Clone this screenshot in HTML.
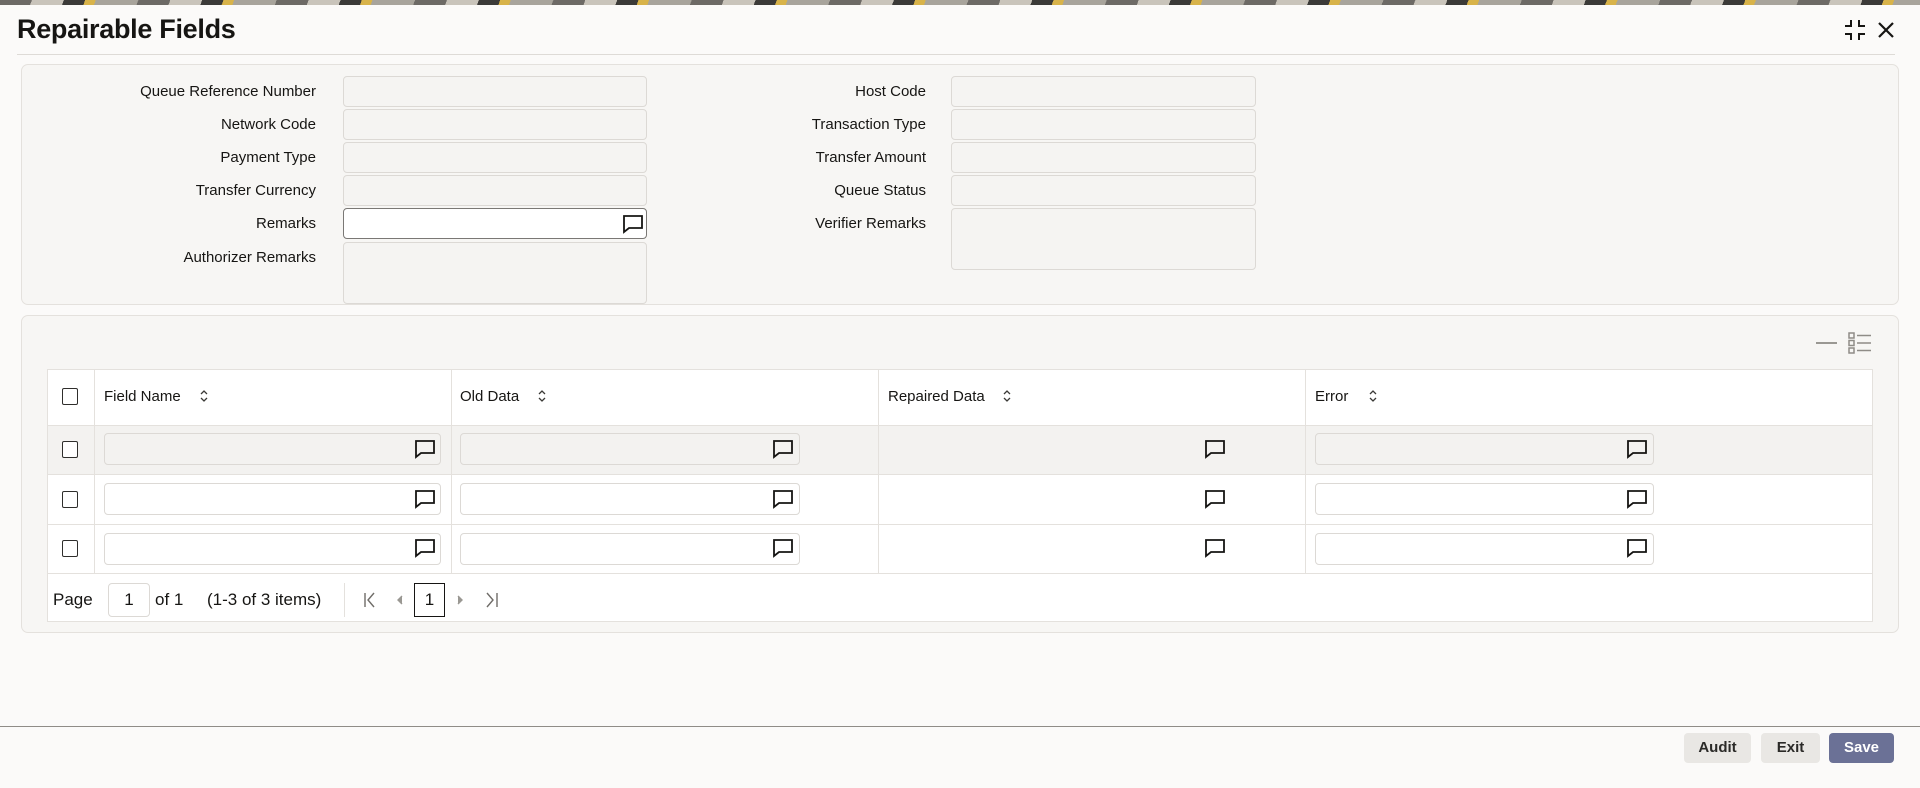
<!DOCTYPE html>
<html><head><meta charset="utf-8"><style>
*{box-sizing:border-box;margin:0;padding:0}
body{width:1920px;height:788px;overflow:hidden;background:#fbfaf9;font-family:"Liberation Sans Narrow","Liberation Sans",sans-serif;color:#161513;position:relative}
.a{position:absolute}
.strip{left:0;top:0;width:1920px;height:5px;background:repeating-linear-gradient(110deg,#6d6a66 0 30px,#c9c4bb 30px 60px,#3b3a38 60px 80px,#d8b34a 80px 90px,#a8a49c 90px 130px)}
h1{position:absolute;left:17px;top:14px;font-size:27px;font-weight:bold;font-family:"Liberation Sans Narrow","Liberation Sans",sans-serif;letter-spacing:-0.3px}
.hl{left:17px;top:54px;width:1878px;height:1px;background:#dedbd7}
.panel{background:#f7f6f4;border:1px solid #e4e1dd;border-radius:7px}
.lbl{font-size:15px;text-align:right;width:300px;color:#161513}
.inp{background:#f5f4f2;border:1px solid #dcd9d5;border-radius:4px;height:31px}
.th{font-size:15px;top:388px}
.cb{width:16px;height:17px;border:1.5px solid #2f2e2c;border-radius:2px;background:#fff}
.ri{height:32px;border:1px solid #dcd9d5;border-radius:4px;background:#fff}
.vl{width:1px;background:#e4e1dd}
.hr{height:1px;background:#e4e1dd}
.btn{height:30px;border-radius:4px;font-size:15px;font-weight:bold;text-align:center;line-height:30px;font-family:"Liberation Sans",sans-serif}
</style></head><body>
<div class="a strip"></div>
<h1>Repairable Fields</h1>
<svg class="a" style="left:1843px;top:18px" width="24" height="24" viewBox="0 0 24 24" fill="none" stroke="#161513" stroke-width="2"><path d="M2 8h6V2M22 8h-6V2M2 16h6v6M22 16h-6v6"/></svg>
<svg class="a" style="left:1876px;top:20px" width="20" height="20" viewBox="0 0 20 20" stroke="#161513" stroke-width="2.2"><path d="M3 3l14 14M17 3L3 17"/></svg>
<div class="a hl"></div>

<div class="a panel" style="left:21px;top:64px;width:1878px;height:241px"></div>
<div class="a lbl" style="left:16px;top:83px">Queue Reference Number</div>
<div class="a lbl" style="left:16px;top:116px">Network Code</div>
<div class="a lbl" style="left:16px;top:149px">Payment Type</div>
<div class="a lbl" style="left:16px;top:182px">Transfer Currency</div>
<div class="a lbl" style="left:16px;top:215px">Remarks</div>
<div class="a lbl" style="left:16px;top:249px">Authorizer Remarks</div>
<div class="a inp" style="left:343px;top:76px;width:304px"></div>
<div class="a inp" style="left:343px;top:109px;width:304px"></div>
<div class="a inp" style="left:343px;top:142px;width:304px"></div>
<div class="a inp" style="left:343px;top:175px;width:304px"></div>
<div class="a inp" style="left:343px;top:208px;width:304px;background:#fff;border-color:#7a7875"></div>
<svg class="a" style="left:622px;top:213px" width="22" height="22" viewBox="0 0 22 22" fill="none" stroke="#161513" stroke-width="1.8"><path d="M2 3h18v12H7l-5 4z"/></svg>
<div class="a inp" style="left:343px;top:242px;width:304px;height:62px"></div>

<div class="a lbl" style="left:626px;top:83px">Host Code</div>
<div class="a lbl" style="left:626px;top:116px">Transaction Type</div>
<div class="a lbl" style="left:626px;top:149px">Transfer Amount</div>
<div class="a lbl" style="left:626px;top:182px">Queue Status</div>
<div class="a lbl" style="left:626px;top:215px">Verifier Remarks</div>
<div class="a inp" style="left:951px;top:76px;width:305px"></div>
<div class="a inp" style="left:951px;top:109px;width:305px"></div>
<div class="a inp" style="left:951px;top:142px;width:305px"></div>
<div class="a inp" style="left:951px;top:175px;width:305px"></div>
<div class="a inp" style="left:951px;top:208px;width:305px;height:62px"></div>

<div class="a panel" style="left:21px;top:315px;width:1878px;height:318px"></div>
<div class="a" style="left:1816px;top:342px;width:21px;height:2px;background:#9a9893"></div>
<svg class="a" style="left:1848px;top:331px" width="24" height="24" viewBox="0 0 24 24" fill="none" stroke="#8f8c87" stroke-width="1.5"><rect x="1" y="2" width="5" height="5"/><rect x="1" y="9.5" width="5" height="5"/><rect x="1" y="17" width="5" height="5"/><path d="M9 4.5h14M9 12h14M9 19.5h14"/></svg>

<div class="a" style="left:47px;top:369px;width:1826px;height:253px;background:#fff;border:1px solid #e4e1dd"></div>
<div class="a" style="left:48px;top:425px;width:1824px;height:49px;background:#f3f2f0"></div>
<div class="a hr" style="left:47px;top:425px;width:1826px"></div>
<div class="a hr" style="left:47px;top:474px;width:1826px"></div>
<div class="a hr" style="left:47px;top:524px;width:1826px"></div>
<div class="a hr" style="left:47px;top:573px;width:1826px"></div>
<div class="a vl" style="left:94px;top:369px;height:204px"></div>
<div class="a vl" style="left:451px;top:369px;height:204px"></div>
<div class="a vl" style="left:878px;top:369px;height:204px"></div>
<div class="a vl" style="left:1305px;top:369px;height:204px"></div>

<div class="a cb" style="left:62px;top:388px"></div>
<div class="a th" style="left:104px">Field Name</div>
<div class="a th" style="left:460px">Old Data</div>
<div class="a th" style="left:888px">Repaired Data</div>
<div class="a th" style="left:1315px">Error</div>
<svg class="a" style="left:198px;top:388px" width="12" height="16" viewBox="0 0 12 16" fill="none" stroke="#3a3936" stroke-width="1.3"><path d="M3 6l3-3 3 3M3 10l3 3 3-3"/></svg>
<svg class="a" style="left:536px;top:388px" width="12" height="16" viewBox="0 0 12 16" fill="none" stroke="#3a3936" stroke-width="1.3"><path d="M3 6l3-3 3 3M3 10l3 3 3-3"/></svg>
<svg class="a" style="left:1001px;top:388px" width="12" height="16" viewBox="0 0 12 16" fill="none" stroke="#3a3936" stroke-width="1.3"><path d="M3 6l3-3 3 3M3 10l3 3 3-3"/></svg>
<svg class="a" style="left:1367px;top:388px" width="12" height="16" viewBox="0 0 12 16" fill="none" stroke="#3a3936" stroke-width="1.3"><path d="M3 6l3-3 3 3M3 10l3 3 3-3"/></svg>

<!-- rows -->
<div class="a cb" style="left:62px;top:441px"></div>
<div class="a cb" style="left:62px;top:491px"></div>
<div class="a cb" style="left:62px;top:540px"></div>
<div class="a ri" style="left:104px;top:433px;width:337px;background:#f3f2f0"></div>
<div class="a ri" style="left:460px;top:433px;width:340px;background:#f3f2f0"></div>
<div class="a ri" style="left:1315px;top:433px;width:339px;background:#f3f2f0"></div>
<div class="a ri" style="left:104px;top:483px;width:337px"></div>
<div class="a ri" style="left:460px;top:483px;width:340px"></div>
<div class="a ri" style="left:1315px;top:483px;width:339px"></div>
<div class="a ri" style="left:104px;top:533px;width:337px"></div>
<div class="a ri" style="left:460px;top:533px;width:340px"></div>
<div class="a ri" style="left:1315px;top:533px;width:339px"></div>

<svg width="0" height="0" style="position:absolute"><defs><symbol id="cm" viewBox="0 0 22 22"><path d="M2 3h18v12H7l-5 4z" fill="none" stroke="#161513" stroke-width="1.8"/></symbol></defs></svg>
<svg class="a" style="left:414px;top:438px" width="22" height="22"><use href="#cm"/></svg>
<svg class="a" style="left:772px;top:438px" width="22" height="22"><use href="#cm"/></svg>
<svg class="a" style="left:1204px;top:438px" width="22" height="22"><use href="#cm"/></svg>
<svg class="a" style="left:1626px;top:438px" width="22" height="22"><use href="#cm"/></svg>
<svg class="a" style="left:414px;top:488px" width="22" height="22"><use href="#cm"/></svg>
<svg class="a" style="left:772px;top:488px" width="22" height="22"><use href="#cm"/></svg>
<svg class="a" style="left:1204px;top:488px" width="22" height="22"><use href="#cm"/></svg>
<svg class="a" style="left:1626px;top:488px" width="22" height="22"><use href="#cm"/></svg>
<svg class="a" style="left:414px;top:537px" width="22" height="22"><use href="#cm"/></svg>
<svg class="a" style="left:772px;top:537px" width="22" height="22"><use href="#cm"/></svg>
<svg class="a" style="left:1204px;top:537px" width="22" height="22"><use href="#cm"/></svg>
<svg class="a" style="left:1626px;top:537px" width="22" height="22"><use href="#cm"/></svg>

<!-- pagination -->
<div class="a" style="left:53px;top:590px;font-size:17px">Page</div>
<div class="a" style="left:108px;top:583px;width:42px;height:34px;border:1px solid #dcd9d5;border-radius:4px;font-size:17px;text-align:center;line-height:32px">1</div>
<div class="a" style="left:155px;top:590px;font-size:17px">of 1</div>
<div class="a" style="left:207px;top:590px;font-size:17px">(1-3 of 3 items)</div>
<div class="a vl" style="left:344px;top:583px;height:34px"></div>
<svg class="a" style="left:358px;top:590px" width="150" height="20" viewBox="0 0 150 20" fill="none" stroke="#6f6c68" stroke-width="1.4"><path d="M7 3v14M16 3l-6 7 6 7"/><path d="M44 6l-4 4 4 4" fill="#9a9893" stroke="#9a9893"/><path d="M100 6l4 4-4 4" fill="#9a9893" stroke="#9a9893"/><path d="M129 3l6 7-6 7M139 3v14"/></svg>
<div class="a" style="left:414px;top:583px;width:31px;height:34px;border:1px solid #161513;font-size:17px;text-align:center;line-height:32px">1</div>

<div class="a" style="left:0;top:726px;width:1920px;height:1px;background:#8f8c87"></div>
<div class="a btn" style="left:1684px;top:733px;width:67px;background:#e9e7e4;color:#2b2a28">Audit</div>
<div class="a btn" style="left:1761px;top:733px;width:59px;background:#e9e7e4;color:#2b2a28">Exit</div>
<div class="a btn" style="left:1829px;top:733px;width:65px;background:#6b7196;color:#fff">Save</div>
</body></html>
